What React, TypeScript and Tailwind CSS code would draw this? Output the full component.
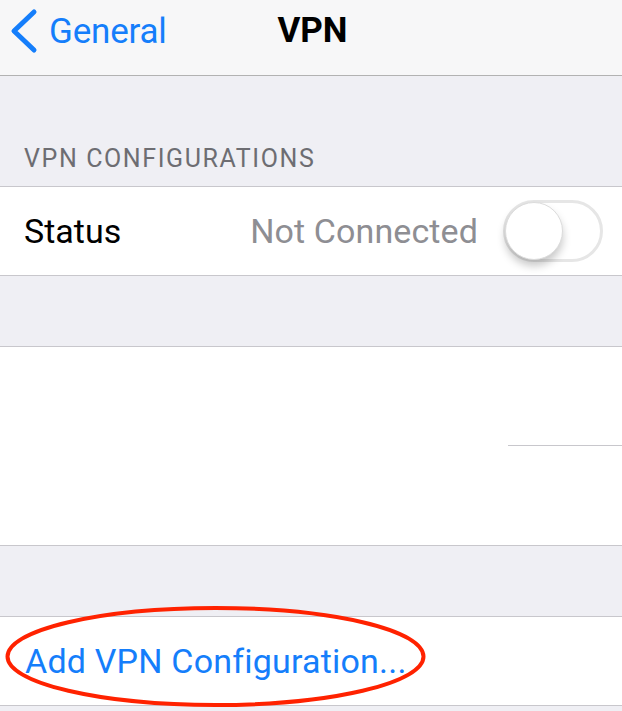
import React, { useState } from "react";

const font = { fontFamily: "Roboto, 'Liberation Sans', sans-serif" };

const Toggle: React.FC<{ on: boolean; onChange: () => void }> = ({ on, onChange }) => (
  <button
    onClick={onChange}
    className={`relative w-[100px] h-[62px] rounded-full border-[3px] ${
      on ? "bg-[#4cd964] border-[#4cd964]" : "bg-white border-[#e6e6e6]"
    }`}
  >
    <span
      className={`absolute top-[-1px] w-[58px] h-[58px] rounded-full bg-white border border-[#dcdcdc] shadow-[0_6px_8px_rgba(0,0,0,0.22)] ${
        on ? "left-[37px]" : "left-[-1px]"
      }`}
    />
  </button>
);

export default function App() {
  const [connected, setConnected] = useState(false);

  return (
    <div className="relative w-[622px] h-[711px] overflow-hidden bg-[#efeff4]" style={font}>
      {/* ナビゲーションバー */}
      <div className="relative h-[76px] bg-[#f7f7f8] border-b border-[#b2b2b2]">
        <div className="absolute left-[8px] top-[8px] flex items-center text-[#157efb]">
          <svg width="32" height="46" viewBox="0 0 32 46">
            <polyline
              points="26,4 6,23 26,42"
              fill="none"
              stroke="#157efb"
              strokeWidth="5"
              strokeLinecap="round"
              strokeLinejoin="round"
            />
          </svg>
          <span className="ml-[9px] text-[35px] leading-none tracking-[-0.2px]">General</span>
        </div>
        <div className="pt-[13px] pl-[3px] text-center text-[35px] leading-none font-bold text-black">VPN</div>
      </div>

      {/* セクションヘッダー */}
      <div className="h-[110px] flex items-end pb-[15px] pl-[24px] text-[25px] leading-none text-[#6d6d72] tracking-[1.6px]">
        VPN CONFIGURATIONS
      </div>

      {/* ステータス行 */}
      <div className="bg-white border-y border-[#c8c7cc] h-[90px] flex items-center pl-[24px] pr-[19px]">
        <span className="text-[34px] text-black">Status</span>
        <span className="ml-auto mr-[25px] text-[34px] text-[#8e8e93] tracking-[0.1px]">
          {connected ? "Connected" : "Not Connected"}
        </span>
        <Toggle on={connected} onChange={() => setConnected(!connected)} />
      </div>

      <div className="h-[70px]" />

      {/* 空のブロック */}
      <div className="bg-white border-y border-[#c8c7cc] h-[200px] flex flex-col">
        <div className="h-[98px]" />
        <div className="ml-auto w-[114px] h-px bg-[#c8c7cc]" />
      </div>

      <div className="h-[70px]" />

      {/* 追加ボタン */}
      <div className="bg-white border-y border-[#c8c7cc] h-[90px] flex items-center pl-[25px]">
        <span className="text-[34px] text-[#157efb] tracking-[0.2px]">Add VPN Configuration...</span>
      </div>

      {/* 赤い丸囲み */}
      <svg className="absolute left-0 top-0 pointer-events-none" width="622" height="711">
        <ellipse cx="215.5" cy="656.5" rx="208" ry="48.5" fill="none" stroke="#ff2200" strokeWidth="4" />
      </svg>
    </div>
  );
}
